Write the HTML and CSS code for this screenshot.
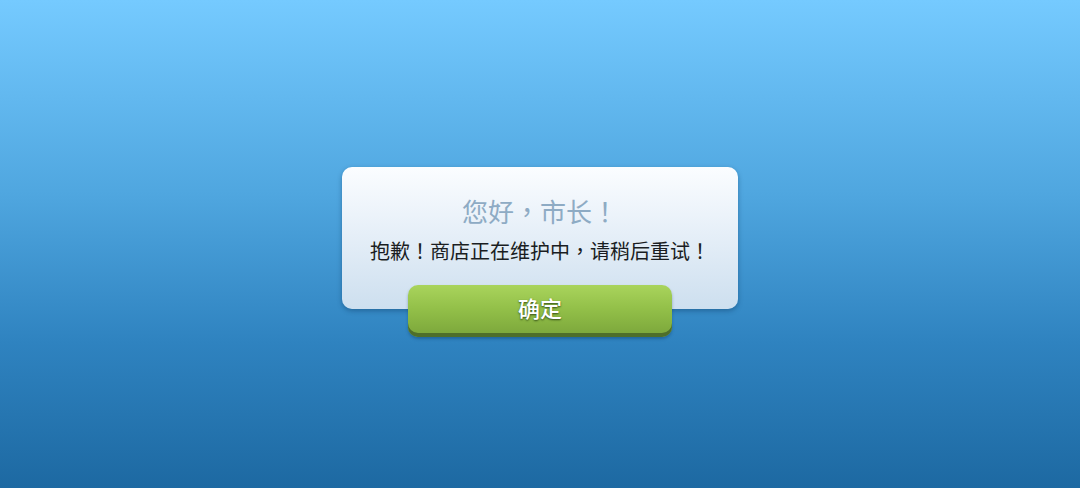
FILE: index.html
```html
<!DOCTYPE html>
<html>

<head>
    <title>商店维护</title>

    <link rel="stylesheet" href="styles.css">
</head>

<body>

    <div class="notice">
        <div class="notice-box">
            <h1 class="notice-title">您好，市长！</h1>
            <p class="notice-text">抱歉！商店正在维护中，请稍后重试！</p>
        </div>
        <button class="notice-btn" type="button">确定</button>
    </div>

</body>

</html>
```

FILE: styles.css
```css
html,
body {
    height: 100%;
}

body {
    margin: 0;
    background: linear-gradient(to bottom, #75caff 0%, #4fa6df 40%, #2f83c0 70%, #1d69a2 100%);
    font-family: "Noto Sans CJK TC", "Noto Sans CJK SC", sans-serif;
    text-spacing-trim: space-all;
    display: flex;
    justify-content: center;
    align-items: flex-start;
}

/**
 * The dialog and its button
 */
.notice {
    margin-top: 167px;
    display: flex;
    flex-direction: column;
    align-items: center;
}

.notice-box {
    width: 396px;
    box-sizing: border-box;
    padding: 27px 0 45px;
    border-radius: 10px;
    background: linear-gradient(to bottom, #fbfdff 0%, #e9f1f9 40%, #cddfef 100%);
    box-shadow: 0 2px 5px rgba(10, 50, 90, 0.4);
    text-align: center;
}

.notice-title {
    margin: 0;
    font-size: 26px;
    line-height: 34px;
    font-weight: normal;
    color: #8eabc4;
}

.notice-text {
    margin: 10px 0 0;
    font-size: 20px;
    line-height: 26px;
    font-weight: normal;
    color: #1a1d22;
}

.notice-btn {
    margin-top: -24px;
    width: 264px;
    height: 52px;
    padding: 0 0 8px;
    border: 0;
    border-radius: 10px;
    background: linear-gradient(to bottom, #a9d45c 0%, #93c049 45%, #7aa53a 100%);
    box-shadow: inset 0 -4px 0 #4e6e2a, 0 2px 3px rgba(10, 50, 90, 0.35);
    font-family: inherit;
    font-size: 22px;
    font-weight: 500;
    color: #fff;
    text-shadow: 0 1px 2px #2f4a14;
    cursor: pointer;
}
```
